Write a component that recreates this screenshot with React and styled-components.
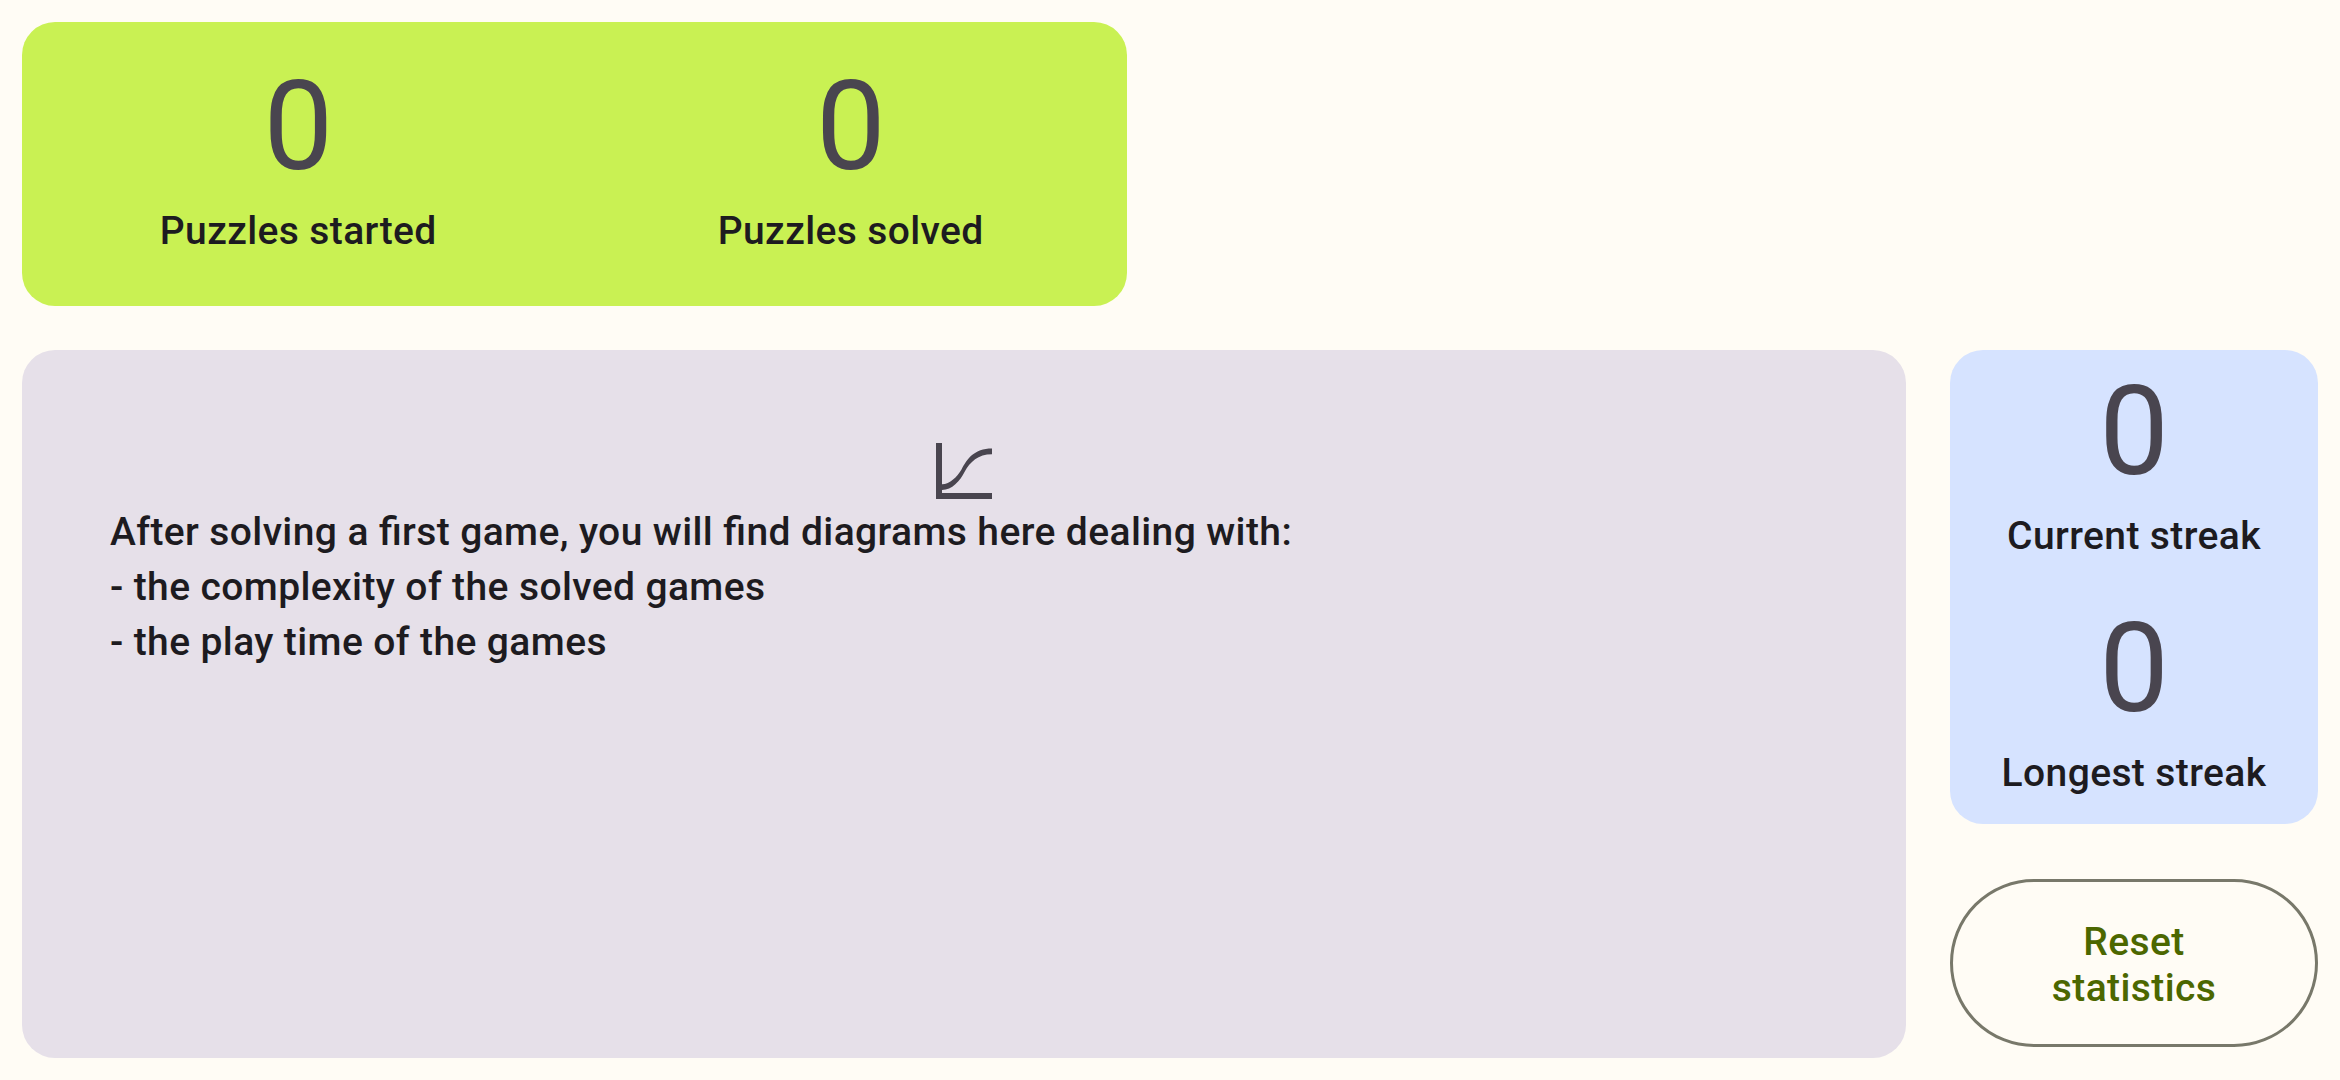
import React from "react";
import styled, { createGlobalStyle } from "styled-components";

const GlobalStyle = createGlobalStyle`
  *, *::before, *::after { box-sizing: border-box; }
  body {
    margin: 0;
    background: #fffcf5;
    color: #1d1b20;
    font-family: Roboto, "Noto Sans", sans-serif;
  }
`;

const Page = styled.main`
  min-height: 100vh;
  padding: 22px;
  display: flex;
  flex-direction: column;
  gap: 44px;
`;

const Card = styled.section`
  background: ${(p) => p.$color};
  border-radius: 33px;
`;

const PuzzleCard = styled(Card)`
  width: calc(50% - 43px);
  display: grid;
  grid-template-columns: 1fr 1fr;
  padding: 33px 0 34px;
`;

const Columns = styled.div`
  flex: 1;
  display: grid;
  grid-template-columns: 1fr 368px;
  gap: 44px;
`;

const ChartCard = styled(Card)`
  padding: 93px 88px;
  display: flex;
  flex-direction: column;
  gap: 6px;
`;

const ChartIcon = styled.svg`
  width: 56px;
  height: 56px;
  align-self: center;
  fill: #49454f;
`;

const Hint = styled.p`
  margin: 0;
  font-size: 39px;
  font-weight: 500;
  line-height: 55px;
  letter-spacing: 0.01em;
  font-feature-settings: "liga" 1;
  white-space: pre-line;
`;

const Side = styled.aside`
  display: flex;
  flex-direction: column;
  gap: 55px;
`;

const StreakCard = styled(Card)`
  display: flex;
  flex-direction: column;
  gap: 20px;
  padding: 10px 0;
`;

const StatBox = styled.div`
  display: flex;
  flex-direction: column;
  align-items: center;
  gap: 6px;
  padding-bottom: 13px;
`;

const StatValue = styled.span`
  color: #49454f;
  font-size: 124px;
  line-height: 143px;
`;

const StatLabel = styled.span`
  font-size: 39px;
  font-weight: 500;
  line-height: 55px;
  letter-spacing: 0.01em;
`;

const ResetButton = styled.button`
  padding: 37px 66px 33px;
  border: 3px solid #78786a;
  border-radius: 84px;
  background: transparent;
  color: #4c6700;
  font-family: inherit;
  font-size: 39px;
  font-weight: 500;
  line-height: 46px;
  letter-spacing: 0.01em;
  cursor: pointer;
`;

function Stat({ value, label }) {
  return (
    <StatBox>
      <StatValue>{value}</StatValue>
      <StatLabel>{label}</StatLabel>
    </StatBox>
  );
}

const hint = `After solving a first game, you will find diagrams here dealing with:
- the complexity of the solved games
- the play time of the games`;

export default function App() {
  return (
    <>
      <GlobalStyle />
      <Page>
        <PuzzleCard $color="#c9f153">
          <Stat value={0} label="Puzzles started" />
          <Stat value={0} label="Puzzles solved" />
        </PuzzleCard>
        <Columns>
          <ChartCard $color="#e6e0e9">
            <ChartIcon viewBox="0 0 56 56" aria-hidden="true">
              <path d="M0 0H6V50H56V56H0Z" />
              <path d="M6 41.3C14 41 21 34 25.5 26.5C31 16 38 5.5 56 5.5V11.2C42 11.2 34 19 28.8 28.5C24 38 16 47 6 47Z" />
            </ChartIcon>
            <Hint>{hint}</Hint>
          </ChartCard>
          <Side>
            <StreakCard $color="#d6e3ff">
              <Stat value={0} label="Current streak" />
              <Stat value={0} label="Longest streak" />
            </StreakCard>
            <ResetButton type="button">Reset statistics</ResetButton>
          </Side>
        </Columns>
      </Page>
    </>
  );
}
